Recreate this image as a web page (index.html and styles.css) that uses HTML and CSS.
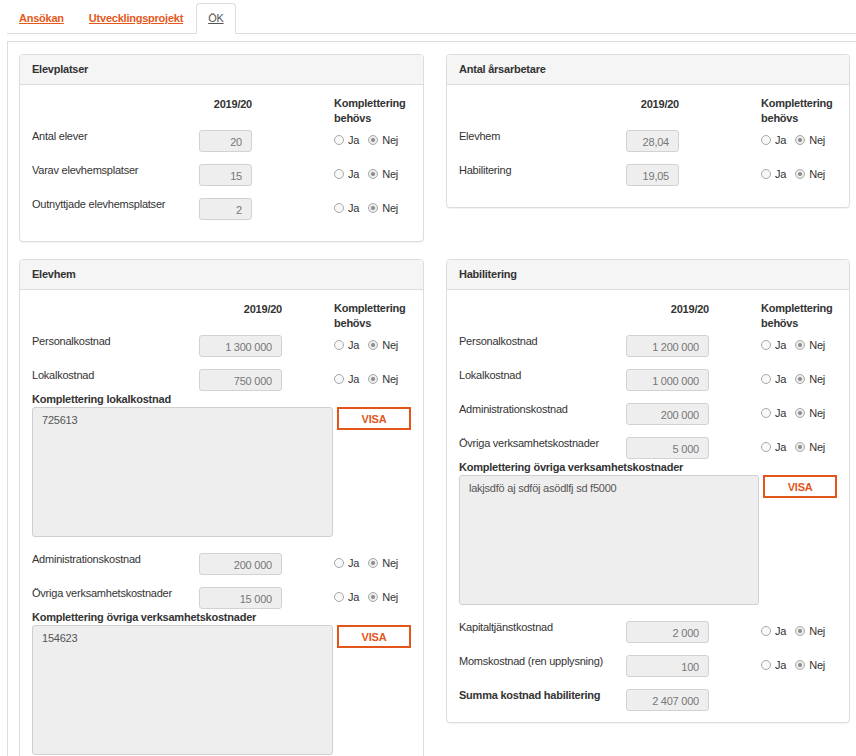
FILE: index.html
```html
<!DOCTYPE html>
<html lang="sv">
<head>
<meta charset="utf-8">
<title>ÖK</title>
<link rel="stylesheet" href="styles.css">
</head>
<body>
<ul class="tabs">
  <li><a class="tab link">Ansökan</a></li>
  <li><a class="tab link">Utvecklingsprojekt</a></li>
  <li><a class="tab active">ÖK</a></li>
</ul>
<div class="content">
  <div class="columns">
    <section class="panel">
      <div class="panel-heading">Elevplatser</div>
      <div class="panel-body">
        <div class="row head"><span class="label"></span><span class="cell"><span class="hcell narrow">2019/20</span></span><span class="komp-h">Komplettering<br>behövs</span></div>
        <div class="row"><span class="label">Antal elever</span><span class="cell"><input class="field narrow" value="20" readonly></span><span class="radios"><span class="radio"></span><span class="rl">Ja</span><span class="radio on"></span><span class="rl">Nej</span></span></div>
        <div class="row"><span class="label">Varav elevhemsplatser</span><span class="cell"><input class="field narrow" value="15" readonly></span><span class="radios"><span class="radio"></span><span class="rl">Ja</span><span class="radio on"></span><span class="rl">Nej</span></span></div>
        <div class="row"><span class="label">Outnyttjade elevhemsplatser</span><span class="cell"><input class="field narrow" value="2" readonly></span><span class="radios"><span class="radio"></span><span class="rl">Ja</span><span class="radio on"></span><span class="rl">Nej</span></span></div>
      </div>
    </section>

    <section class="panel">
      <div class="panel-heading">Antal årsarbetare</div>
      <div class="panel-body">
        <div class="row head"><span class="label"></span><span class="cell"><span class="hcell narrow">2019/20</span></span><span class="komp-h">Komplettering<br>behövs</span></div>
        <div class="row"><span class="label">Elevhem</span><span class="cell"><input class="field narrow" value="28,04" readonly></span><span class="radios"><span class="radio"></span><span class="rl">Ja</span><span class="radio on"></span><span class="rl">Nej</span></span></div>
        <div class="row"><span class="label">Habilitering</span><span class="cell"><input class="field narrow" value="19,05" readonly></span><span class="radios"><span class="radio"></span><span class="rl">Ja</span><span class="radio on"></span><span class="rl">Nej</span></span></div>
      </div>
    </section>

    <section class="panel">
      <div class="panel-heading">Elevhem</div>
      <div class="panel-body">
        <div class="row head"><span class="label"></span><span class="cell"><span class="hcell wide">2019/20</span></span><span class="komp-h">Komplettering<br>behövs</span></div>
        <div class="row"><span class="label">Personalkostnad</span><span class="cell"><input class="field wide" value="1 300 000" readonly></span><span class="radios"><span class="radio"></span><span class="rl">Ja</span><span class="radio on"></span><span class="rl">Nej</span></span></div>
        <div class="row"><span class="label">Lokalkostnad</span><span class="cell"><input class="field wide" value="750 000" readonly></span><span class="radios"><span class="radio"></span><span class="rl">Ja</span><span class="radio on"></span><span class="rl">Nej</span></span></div>
        <div class="komp">
          <div class="komp-label">Komplettering lokalkostnad</div>
          <div class="komp-row"><textarea class="komp-text" readonly>725613</textarea><button class="visa" type="button">VISA</button></div>
        </div>
        <div class="row"><span class="label">Administrationskostnad</span><span class="cell"><input class="field wide" value="200 000" readonly></span><span class="radios"><span class="radio"></span><span class="rl">Ja</span><span class="radio on"></span><span class="rl">Nej</span></span></div>
        <div class="row"><span class="label">Övriga verksamhetskostnader</span><span class="cell"><input class="field wide" value="15 000" readonly></span><span class="radios"><span class="radio"></span><span class="rl">Ja</span><span class="radio on"></span><span class="rl">Nej</span></span></div>
        <div class="komp">
          <div class="komp-label">Komplettering övriga verksamhetskostnader</div>
          <div class="komp-row"><textarea class="komp-text" readonly>154623</textarea><button class="visa" type="button">VISA</button></div>
        </div>
      </div>
    </section>

    <section class="panel">
      <div class="panel-heading">Habilitering</div>
      <div class="panel-body">
        <div class="row head"><span class="label"></span><span class="cell"><span class="hcell wide">2019/20</span></span><span class="komp-h">Komplettering<br>behövs</span></div>
        <div class="row"><span class="label">Personalkostnad</span><span class="cell"><input class="field wide" value="1 200 000" readonly></span><span class="radios"><span class="radio"></span><span class="rl">Ja</span><span class="radio on"></span><span class="rl">Nej</span></span></div>
        <div class="row"><span class="label">Lokalkostnad</span><span class="cell"><input class="field wide" value="1 000 000" readonly></span><span class="radios"><span class="radio"></span><span class="rl">Ja</span><span class="radio on"></span><span class="rl">Nej</span></span></div>
        <div class="row"><span class="label">Administrationskostnad</span><span class="cell"><input class="field wide" value="200 000" readonly></span><span class="radios"><span class="radio"></span><span class="rl">Ja</span><span class="radio on"></span><span class="rl">Nej</span></span></div>
        <div class="row"><span class="label">Övriga verksamhetskostnader</span><span class="cell"><input class="field wide" value="5 000" readonly></span><span class="radios"><span class="radio"></span><span class="rl">Ja</span><span class="radio on"></span><span class="rl">Nej</span></span></div>
        <div class="komp">
          <div class="komp-label">Komplettering övriga verksamhetskostnader</div>
          <div class="komp-row"><textarea class="komp-text" readonly>lakjsdfö aj sdföj asödlfj sd f5000</textarea><button class="visa" type="button">VISA</button></div>
        </div>
        <div class="row"><span class="label">Kapitaltjänstkostnad</span><span class="cell"><input class="field wide" value="2 000" readonly></span><span class="radios"><span class="radio"></span><span class="rl">Ja</span><span class="radio on"></span><span class="rl">Nej</span></span></div>
        <div class="row"><span class="label">Momskostnad (ren upplysning)</span><span class="cell"><input class="field wide" value="100" readonly></span><span class="radios"><span class="radio"></span><span class="rl">Ja</span><span class="radio on"></span><span class="rl">Nej</span></span></div>
        <div class="row last"><span class="label strong">Summa kostnad habilitering</span><span class="cell"><input class="field wide" value="2 407 000" readonly></span></div>
      </div>
    </section>
  </div>
</div>
</body>
</html>
```

FILE: styles.css
```css
* { box-sizing: border-box; }

html, body {
  margin: 0;
  background: #fff;
}

body {
  font-family: "Liberation Sans", Arial, sans-serif;
  font-size: 11px;
  letter-spacing: -0.23px;
  color: #333;
  padding-left: 7px;
  overflow: hidden;
}

.tabs {
  list-style: none;
  margin: 0;
  padding: 3px 0 0;
  display: flex;
  border-bottom: 1px solid #ddd;
}

.tabs li {
  margin: 0 1px -1px 0;
}

.tab {
  display: block;
  padding: 0 11px;
  line-height: 28px;
  height: 31px;
  border: 1px solid transparent;
  border-radius: 4px 4px 0 0;
  text-decoration: underline;
}

.tab.link {
  color: #e5591c;
  font-weight: bold;
}

.tab.active {
  color: #555;
  background: #fff;
  border-color: #ddd #ddd transparent;
}

.content {
  margin-top: 7px;
  border-left: 1px solid #ddd;
  border-top: 1px solid #ddd;
  padding: 12px 0 0 11px;
}

.columns {
  display: grid;
  grid-template-columns: 405px 404px;
  column-gap: 22px;
  row-gap: 17px;
  align-items: start;
}

.panel {
  border: 1px solid #ddd;
  border-radius: 4px;
  box-shadow: 0 1px 1px rgba(0, 0, 0, 0.05);
  background: #fff;
}

.panel-heading {
  height: 30px;
  padding: 0 12px;
  line-height: 28px;
  background: #f5f5f5;
  border-bottom: 1px solid #ddd;
  border-radius: 3px 3px 0 0;
  font-weight: bold;
  color: #333;
}

.panel-body {
  padding: 11px 12px 11px 12px;
}

.row {
  display: flex;
  align-items: flex-start;
  height: 24px;
  margin-bottom: 10px;
}

.row.head {
  height: 30px;
  margin-bottom: 2px;
}

.row.last {
  margin-bottom: 0;
}

.label {
  width: 167px;
  flex: none;
  line-height: 15px;
  padding-top: 1px;
}

.label.strong {
  font-weight: bold;
}

.cell {
  width: 135px;
  flex: none;
  padding-top: 2px;
}

.row.head .cell {
  padding-top: 1px;
}

.hcell {
  display: block;
  text-align: right;
  font-weight: bold;
  line-height: 15px;
}

.komp-h {
  font-weight: bold;
  line-height: 15px;
}

.field {
  display: block;
  height: 22px;
  margin: 0;
  border: 1px solid #d2d2d2;
  border-radius: 3px;
  background: #eee;
  color: #777;
  text-align: right;
  padding: 2px 9px 0 4px;
  font: 11px "Liberation Sans", Arial, sans-serif;
  letter-spacing: -0.23px;
  outline: none;
}

.narrow { width: 53px; }
.wide { width: 83px; }

.radios {
  display: flex;
  align-items: center;
  height: 22px;
  margin-top: 1px;
  color: #333;
}

.radio {
  position: relative;
  width: 10px;
  height: 10px;
  border: 1px solid #a8a8a8;
  border-radius: 50%;
  background: #f8f8f8;
  margin-right: 4px;
  flex: none;
}

.radio.on {
  background: #ececec;
}

.radio.on::after {
  content: "";
  position: absolute;
  left: 2px;
  top: 2px;
  width: 4px;
  height: 4px;
  border-radius: 50%;
  background: #8c8c8c;
}

.rl + .radio {
  margin-left: 9px;
}

.komp {
  margin-top: -10px;
  margin-bottom: 14px;
}

.komp-label {
  font-weight: bold;
  line-height: 16px;
}

.komp-row {
  display: flex;
  align-items: flex-start;
}

.komp-text {
  display: block;
  width: 301px;
  height: 130px;
  margin: 0;
  padding: 5px 9px;
  border: 1px solid #cfcfcf;
  border-radius: 3px;
  background: #eee;
  color: #555;
  font: 11px/15px "Liberation Sans", Arial, sans-serif;
  letter-spacing: -0.23px;
  resize: none;
  outline: none;
}

.visa {
  margin: 0 0 0 4px;
  width: 74px;
  height: 23px;
  padding: 0;
  border: 2px solid #e2561c;
  background: #fff;
  color: #e2561c;
  font: bold 11px "Liberation Sans", Arial, sans-serif;
  letter-spacing: -0.23px;
  cursor: pointer;
}
```
